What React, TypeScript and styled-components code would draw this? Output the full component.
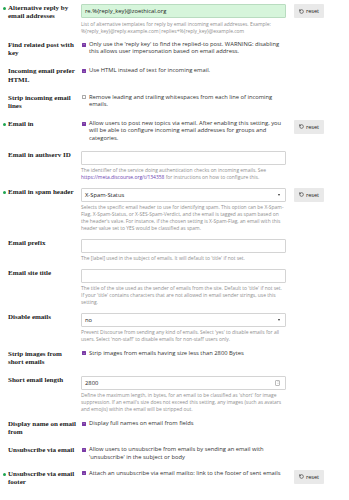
import styled, { createGlobalStyle } from 'styled-components';
import { RotateCcw } from 'lucide-react';

const GlobalStyle = createGlobalStyle`
  html, body {
    margin: 0;
    padding: 0;
    background: #ffffff;
  }
  body {
    font-family: 'Open Sans', 'Noto Sans', sans-serif;
    color: #222222;
  }
`;

const Page = styled.div`
  display: flex;
  flex-direction: column;
  gap: 6.5px;
  padding-top: 4px;
  width: 349px;
`;

const Row = styled.div`
  display: grid;
  grid-template-columns: 78px 205px 30px;
  column-gap: 3px;
  align-items: start;
`;

const Label = styled.div`
  display: flex;
  padding-bottom: 3px;
  font-family: 'Liberation Serif', 'Times New Roman', serif;
  font-weight: 700;
  font-size: 7px;
  line-height: 8.4px;
  color: #222222;
`;

const DotSlot = styled.span`
  flex: 0 0 8px;
  display: flex;
  justify-content: center;
  padding-top: 3px;
`;

const Dot = styled.span`
  width: 3px;
  height: 3px;
  border-radius: 50%;
  background: #1ea44f;
`;

const Control = styled.div`
  display: flex;
  flex-direction: column;
  min-width: 0;
`;

const Field = styled.div<{ $changed?: boolean }>`
  height: 14px;
  box-sizing: border-box;
  border: 1px solid ${p => (p.$changed ? '#b9dcc0' : '#d4d4d4')};
  background: ${p => (p.$changed ? '#d6f5db' : '#ffffff')};
  border-radius: 1px;
  display: flex;
  align-items: center;
  justify-content: space-between;
  padding: 0 5px 0 3px;
  font-size: 5.8px;
  color: #222222;
`;

const Caret = styled.span`
  width: 0;
  height: 0;
  border-left: 1.6px solid transparent;
  border-right: 1.6px solid transparent;
  border-top: 2px solid #333333;
`;

const Spinner = styled.span`
  width: 3px;
  height: 4px;
  border: 0.5px solid #bbbbbb;
  border-radius: 1px;
  display: flex;
  align-items: center;
  justify-content: center;
`;

const Desc = styled.div`
  margin-top: 2.5px;
  font-size: 4.95px;
  line-height: 7px;
  color: #8f8f8f;
  a {
    color: #6b43b0;
    text-decoration: none;
  }
`;

const NoWrap = styled.span`
  white-space: nowrap;
`;

const CheckRow = styled.div`
  display: flex;
  gap: 3px;
  align-items: flex-start;
  padding-bottom: 2px;
  font-size: 5.8px;
  line-height: 7.4px;
  color: #333333;
`;

const Box = styled.span<{ $on: boolean }>`
  flex: 0 0 auto;
  width: 4px;
  height: 4px;
  margin-top: 1.7px;
  margin-left: 1px;
  border-radius: 0.6px;
  box-sizing: border-box;
  border: 0.6px solid ${p => (p.$on ? '#7a3aa6' : '#a9a9a9')};
  background: ${p => (p.$on ? '#7a3aa6' : '#ffffff')};
  display: flex;
  align-items: center;
  justify-content: center;
`;

const ResetButton = styled.button`
  margin-left: 5px;
  width: 30px;
  height: 14px;
  padding: 0;
  border: none;
  border-radius: 1px;
  background: #e9e9e9;
  color: #222222;
  font-family: 'Open Sans', 'Noto Sans', sans-serif;
  font-size: 5.6px;
  display: flex;
  align-items: center;
  justify-content: center;
  gap: 2px;
`;

type Setting = {
  label: string;
  changed?: boolean;
  kind: 'text' | 'select' | 'number' | 'check';
  value?: string;
  on?: boolean;
  desc?: React.ReactNode;
};

const settings: Setting[] = [
  {
    label: 'Alternative reply by email addresses',
    changed: true,
    kind: 'text',
    value: 're.%{reply_key}@zoethical.org',
    desc: (
      <>
        List of alternative templates for reply by email incoming email addresses. Example:{' '}
        <NoWrap>%{'{reply_key}'}@reply.example.com|replies+%{'{reply_key}'}@example.com</NoWrap>
      </>
    ),
  },
  {
    label: 'Find related post with key',
    kind: 'check',
    on: true,
    value:
      "Only use the 'reply key' to find the replied-to post. WARNING: disabling this allows user impersonation based on email address.",
  },
  {
    label: 'Incoming email prefer HTML',
    kind: 'check',
    on: true,
    value: 'Use HTML instead of text for incoming email.',
  },
  {
    label: 'Strip incoming email lines',
    kind: 'check',
    on: false,
    value: 'Remove leading and trailing whitespaces from each line of incoming emails.',
  },
  {
    label: 'Email in',
    changed: true,
    kind: 'check',
    on: true,
    value:
      'Allow users to post new topics via email. After enabling this setting, you will be able to configure incoming email addresses for groups and categories.',
  },
  {
    label: 'Email in authserv ID',
    kind: 'text',
    value: '',
    desc: (
      <>
        The identifier of the service doing authentication checks on incoming emails. See{' '}
        <a href="#">https://meta.discourse.org/t/134358</a> for instructions on how to configure
        this.
      </>
    ),
  },
  {
    label: 'Email in spam header',
    changed: true,
    kind: 'select',
    value: 'X-Spam-Status',
    desc: "Selects the specific email header to use for identifying spam. This option can be X-Spam-Flag, X-Spam-Status, or X-SES-Spam-Verdict, and the email is tagged as spam based on the header's value. For instance, if the chosen setting is X-Spam-Flag, an email with this header value set to YES would be classified as spam.",
  },
  {
    label: 'Email prefix',
    kind: 'text',
    value: '',
    desc: "The [label] used in the subject of emails. It will default to 'title' if not set.",
  },
  {
    label: 'Email site title',
    kind: 'text',
    value: '',
    desc: "The title of the site used as the sender of emails from the site. Default to 'title' if not set. If your 'title' contains characters that are not allowed in email sender strings, use this setting.",
  },
  {
    label: 'Disable emails',
    kind: 'select',
    value: 'no',
    desc: "Prevent Discourse from sending any kind of emails. Select 'yes' to disable emails for all users. Select 'non-staff' to disable emails for non-staff users only.",
  },
  {
    label: 'Strip images from short emails',
    kind: 'check',
    on: true,
    value: 'Strip images from emails having size less than 2800 Bytes',
  },
  {
    label: 'Short email length',
    kind: 'number',
    value: '2800',
    desc: "Define the maximum length, in bytes, for an email to be classified as 'short' for image suppression. If an email's size does not exceed this setting, any images (such as avatars and emojis) within the email will be stripped out.",
  },
  {
    label: 'Display name on email from',
    kind: 'check',
    on: true,
    value: 'Display full names on email from fields',
  },
  {
    label: 'Unsubscribe via email',
    kind: 'check',
    on: true,
    value:
      "Allow users to unsubscribe from emails by sending an email with 'unsubscribe' in the subject or body",
  },
  {
    label: 'Unsubscribe via email footer',
    changed: true,
    kind: 'check',
    on: true,
    value: 'Attach an unsubscribe via email mailto: link to the footer of sent emails',
  },
];

const CheckMark = () => (
  <svg width="3" height="3" viewBox="0 0 10 10">
    <path d="M2 5.2 L4.2 7.4 L8.2 2.8" stroke="#fff" strokeWidth="1.8" fill="none" />
  </svg>
);

const SpinArrows = () => (
  <svg width="2" height="3" viewBox="0 0 4 6">
    <path d="M0.5 2.4 L2 0.8 L3.5 2.4 M0.5 3.6 L2 5.2 L3.5 3.6" stroke="#888" strokeWidth="0.7" fill="none" />
  </svg>
);

const SettingControl = ({ s }: { s: Setting }) => {
  if (s.kind === 'check') {
    return (
      <CheckRow>
        <Box $on={!!s.on}>{s.on && <CheckMark />}</Box>
        <span>{s.value}</span>
      </CheckRow>
    );
  }
  return (
    <>
      <Field $changed={s.changed && s.kind === 'text'}>
        <span>{s.value}</span>
        {s.kind === 'select' && <Caret />}
        {s.kind === 'number' && (
          <Spinner>
            <SpinArrows />
          </Spinner>
        )}
      </Field>
      {s.desc && <Desc>{s.desc}</Desc>}
    </>
  );
};

export default function App() {
  return (
    <>
      <GlobalStyle />
      <Page>
        {settings.map(s => (
          <Row key={s.label}>
            <Label>
              <DotSlot>{s.changed && <Dot />}</DotSlot>
              <span>{s.label}</span>
            </Label>
            <Control>
              <SettingControl s={s} />
            </Control>
            {s.changed && (
              <ResetButton>
                <RotateCcw size={5} strokeWidth={2.5} />
                reset
              </ResetButton>
            )}
          </Row>
        ))}
      </Page>
    </>
  );
}
